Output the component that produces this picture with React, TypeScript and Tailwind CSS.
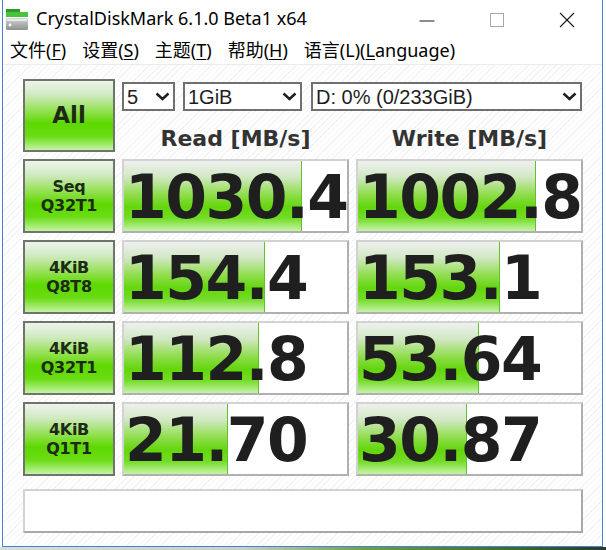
import React from "react";

const rows = [
  { l1: "Seq", l2: "Q32T1", read: "1030.4", rw: 178, write: "1002.8", ww: 178 },
  { l1: "4KiB", l2: "Q8T8", read: "154.4", rw: 141, write: "153.1", ww: 142 },
  { l1: "4KiB", l2: "Q32T1", read: "112.8", rw: 135, write: "53.64", ww: 121 },
  { l1: "4KiB", l2: "Q1T1", read: "21.70", rw: 104, write: "30.87", ww: 109 },
];

const menu = [
  { cn: "文件", key: "F" },
  { cn: "设置", key: "S" },
  { cn: "主题", key: "T" },
  { cn: "帮助", key: "H" },
];

function Chevron() {
  return (
    <svg width="15" height="9" viewBox="0 0 15 9" className="shrink-0">
      <polyline points="1.5,1.5 7.5,7 13.5,1.5" fill="none" stroke="#1e1e1e" strokeWidth="2.4" />
    </svg>
  );
}

function Dropdown({ text, w }: { text: string; w: string }) {
  return (
    <div className={`${w} h-[29px] flex items-center justify-between border-2 border-[#707070] bg-white pl-[3px] pr-[3px]`}>
      <span className="font-['Liberation_Sans',sans-serif] text-[20px] leading-none text-[#1e1e1e]">{text}</span>
      <Chevron />
    </div>
  );
}

function AppIcon() {
  return (
    <svg width="22" height="21" viewBox="0 0 22 21">
      <defs>
        <linearGradient id="drv" x1="0" y1="0" x2="0" y2="1">
          <stop offset="0" stopColor="#d5d8d6" />
          <stop offset="1" stopColor="#8b908d" />
        </linearGradient>
      </defs>
      <rect x="0" y="0" width="14" height="3" fill="#2f9a2c" />
      <rect x="0" y="3" width="22" height="5" fill="#49c23c" />
      <rect x="0" y="9" width="22" height="12" rx="1.5" fill="url(#drv)" />
      <rect x="1" y="10" width="20" height="2" fill="#e9ebea" />
      <circle cx="4" cy="16" r="1.4" fill="#ffffff" />
    </svg>
  );
}

function Meter({ value, fill }: { value: string; fill: number }) {
  return (
    <div className="relative h-[74px] overflow-hidden bg-white border-2 border-t-[#d2d2d2] border-l-[#d2d2d2] border-r-[#b0b0b0] border-b-[#b0b0b0]">
      <div
        className="absolute inset-y-0 left-0 border-r border-[#62c02c] bg-[linear-gradient(180deg,#eef0ee_0%,#d3e8c6_22%,#8fdd4c_48%,#63d60c_66%,#74dc26_82%,#aaec7e_94%,#c8f2aa_100%)]"
        style={{ width: fill }}
      />
      <div className="relative pl-[1px] font-['DejaVu_Sans',sans-serif] font-bold text-[60px] leading-[72px] tracking-[-1.5px] text-[#1f1f1f] whitespace-nowrap">
        {value}
      </div>
    </div>
  );
}

const greenBtn =
  "flex flex-col items-center justify-center border-2 border-[#6e756c] bg-[linear-gradient(180deg,#eef3ec_0%,#d0eac0_20%,#8fe04a_45%,#5dd800_62%,#6adc14_80%,#a4ec72_93%,#c6f2a6_100%)] font-['DejaVu_Sans',sans-serif] font-bold text-[#1e2a18]";

export default function App() {
  return (
    <div className="w-[606px] h-[550px] bg-white flex flex-col overflow-hidden">
      <div className="flex">
        <div className="ml-[2px] w-[601px] h-[547px] border-x border-b border-[#3f86d6] flex flex-col bg-white">
          {/* title bar */}
          <div className="h-[37px] flex items-center">
            <div className="ml-[3px] mt-[1px]">
              <AppIcon />
            </div>
            <span className="ml-[8px] font-['Noto_Sans',sans-serif] text-[18px] text-black whitespace-nowrap">
              CrystalDiskMark 6.1.0 Beta1 x64
            </span>
            <div className="ml-auto flex">
              <div className="w-[70px] h-[37px] flex items-center justify-center">
                <svg width="18" height="18" viewBox="0 0 18 18">
                  <line x1="1.5" y1="11" x2="16.5" y2="11" stroke="#1a1a1a" strokeWidth="1" />
                </svg>
              </div>
              <div className="w-[70px] h-[37px] flex items-center justify-center">
                <svg width="18" height="18" viewBox="0 0 18 18">
                  <rect x="2.5" y="3.5" width="13" height="13" fill="none" stroke="#a8a8a8" strokeWidth="1" />
                </svg>
              </div>
              <div className="w-[70px] h-[37px] flex items-center justify-center">
                <svg width="18" height="18" viewBox="0 0 18 18">
                  <line x1="2" y1="3" x2="16" y2="17" stroke="#1a1a1a" strokeWidth="1.1" />
                  <line x1="16" y1="3" x2="2" y2="17" stroke="#1a1a1a" strokeWidth="1.1" />
                </svg>
              </div>
            </div>
          </div>

          {/* menu */}
          <div className="h-[28px] flex items-center gap-[16px] pl-[7px] border-b border-[#ececec] font-['Noto_Sans','Noto_Sans_CJK_SC',sans-serif] text-[18px] text-black whitespace-nowrap">
            {menu.map((m) => (
              <span key={m.key}>
                {m.cn}(<u className="underline-offset-2">{m.key}</u>)
              </span>
            ))}
            <span>
              语言(L)(<u className="underline-offset-2">L</u>anguage)
            </span>
          </div>

          {/* content */}
          <div className="flex-1 pl-[20px] pt-[14px] bg-[repeating-linear-gradient(135deg,#ffffff_0px,#ffffff_3px,#f3f3f3_3px,#f3f3f3_4px)]">
            <div className="grid grid-cols-[92px_227px_227px] gap-[7px]">
              <div className={`${greenBtn} h-[73px] text-[23px]`}>All</div>
              <div className="col-span-2 flex flex-col">
                <div className="flex mt-[3px]">
                  <Dropdown text="5" w="w-[53px]" />
                  <div className="ml-[8px]">
                    <Dropdown text="1GiB" w="w-[119px]" />
                  </div>
                  <div className="ml-[9px]">
                    <Dropdown text="D: 0% (0/233GiB)" w="w-[271px]" />
                  </div>
                </div>
                <div className="grid grid-cols-2 gap-[7px] mt-[15px] font-['DejaVu_Sans',sans-serif] font-bold text-[22px] leading-[26px] text-[#333333] text-center">
                  <span>Read [MB/s]</span>
                  <span>Write [MB/s]</span>
                </div>
              </div>

              {rows.map((r, i) => (
                <React.Fragment key={i}>
                  <div className={`${greenBtn} h-[74px] text-[16px] leading-[19px] tracking-[-0.3px]`}>
                    <span>{r.l1}</span>
                    <span>{r.l2}</span>
                  </div>
                  <Meter value={r.read} fill={r.rw} />
                  <Meter value={r.write} fill={r.ww} />
                </React.Fragment>
              ))}

              <div className="col-span-3 mt-[6px] h-[44px] bg-white border-2 border-t-[#d2d2d2] border-l-[#d2d2d2] border-r-[#a8a8a8] border-b-[#a8a8a8]" />
            </div>
          </div>
        </div>
      </div>
      <div className="h-[3px] bg-[linear-gradient(90deg,#d9ddd9_0%,#c9d0c6_40%,#6fa048_60%,#3d6a2a_85%,#2a3a2a_100%)]" />
    </div>
  );
}
